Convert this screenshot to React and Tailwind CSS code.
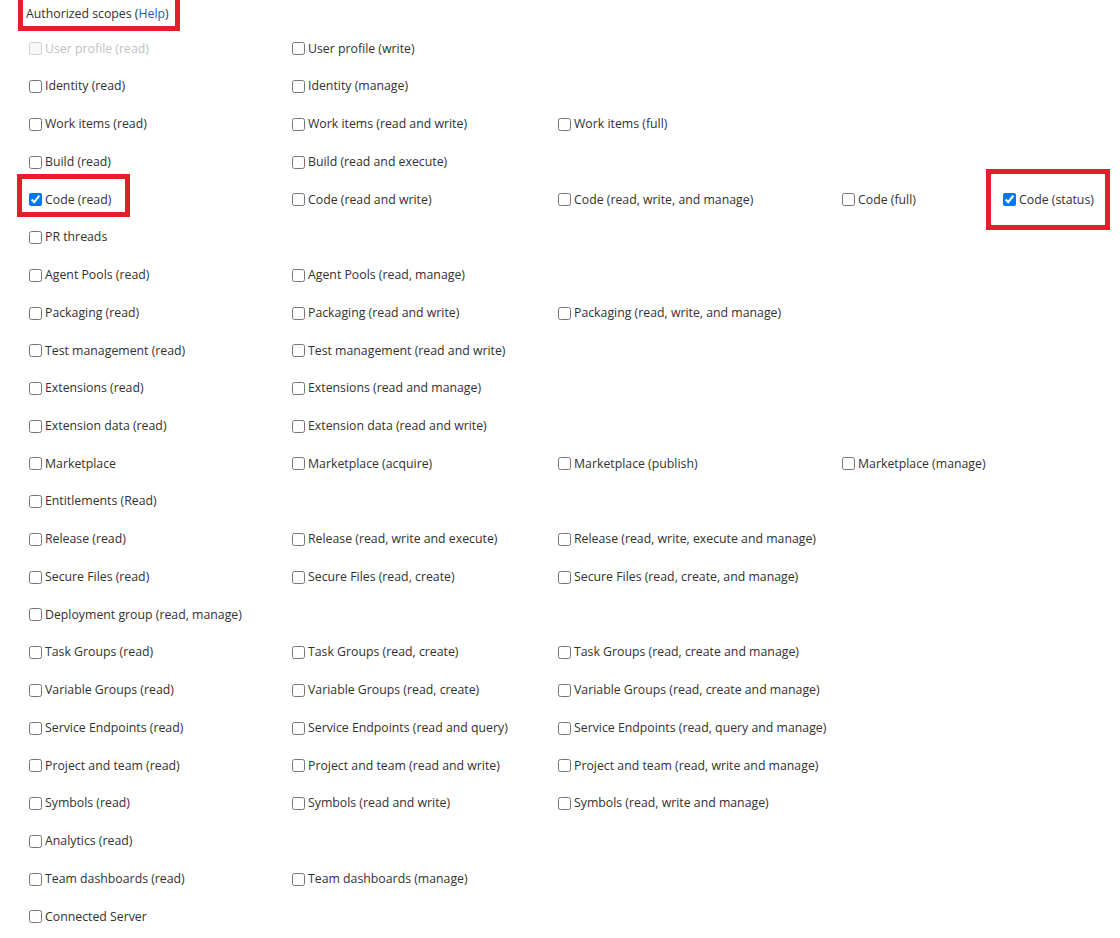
import React from "react";

// scope rows, one array per row, null = empty cell
const rows = [
    [["User profile (read)", "disabled"], ["User profile (write)"]],
    [["Identity (read)"], ["Identity (manage)"]],
    [["Work items (read)"], ["Work items (read and write)"], ["Work items (full)"]],
    [["Build (read)"], ["Build (read and execute)"]],
    [["Code (read)", "checked"], ["Code (read and write)"], ["Code (read, write, and manage)"], ["Code (full)"], ["Code (status)", "checked"]],
    [["PR threads"]],
    [["Agent Pools (read)"], ["Agent Pools (read, manage)"]],
    [["Packaging (read)"], ["Packaging (read and write)"], ["Packaging (read, write, and manage)"]],
    [["Test management (read)"], ["Test management (read and write)"]],
    [["Extensions (read)"], ["Extensions (read and manage)"]],
    [["Extension data (read)"], ["Extension data (read and write)"]],
    [["Marketplace"], ["Marketplace (acquire)"], ["Marketplace (publish)"], ["Marketplace (manage)"]],
    [["Entitlements (Read)"]],
    [["Release (read)"], ["Release (read, write and execute)"], ["Release (read, write, execute and manage)"]],
    [["Secure Files (read)"], ["Secure Files (read, create)"], ["Secure Files (read, create, and manage)"]],
    [["Deployment group (read, manage)"]],
    [["Task Groups (read)"], ["Task Groups (read, create)"], ["Task Groups (read, create and manage)"]],
    [["Variable Groups (read)"], ["Variable Groups (read, create)"], ["Variable Groups (read, create and manage)"]],
    [["Service Endpoints (read)"], ["Service Endpoints (read and query)"], ["Service Endpoints (read, query and manage)"]],
    [["Project and team (read)"], ["Project and team (read and write)"], ["Project and team (read, write and manage)"]],
    [["Symbols (read)"], ["Symbols (read and write)"], ["Symbols (read, write and manage)"]],
    [["Analytics (read)"]],
    [["Team dashboards (read)"], ["Team dashboards (manage)"]],
    [["Connected Server"]],
];

function Scope({ label, state }) {
    const disabled = state === "disabled";
    return (
        <label className={`flex items-center whitespace-nowrap ${disabled ? "text-[#c2c2c2]" : "text-[#323130]"}`}>
            <input
                type="checkbox"
                readOnly
                checked={state === "checked"}
                disabled={disabled}
                className="m-0 mr-[3px] w-[13px] h-[13px] accent-[#0075ff]"
            />
            {label}
        </label>
    );
}

export default function App() {
    return (
        <div className="relative w-[1120px] h-[938px] bg-white overflow-hidden text-[12.3px] font-['Open_Sans',sans-serif]">
            {/* Header */}
            <div className="h-[30px] pl-[26px] pb-[2px] flex items-center text-[#323130]">
                Authorized scopes (<a className="text-[#1f5bb8]">Help</a>)
            </div>

            {/* Scope grid */}
            <div className="pl-[29px] grid grid-cols-[263px_266px_284px_161px_auto] auto-rows-[37.74px] items-center">
                {rows.map((row, i) =>
                    [0, 1, 2, 3, 4].map((c) => (
                        <div key={`${i}-${c}`}>
                            {row[c] && <Scope label={row[c][0]} state={row[c][1]} />}
                        </div>
                    ))
                )}
            </div>

            {/* Red annotation boxes drawn over the form */}
            <div className="absolute left-[18px] top-[-5px] w-[162px] h-[36px] border-[5px] border-[#e3202a]" />
            <div className="absolute left-[17px] top-[174px] w-[113px] h-[43px] border-[5px] border-[#e3202a]" />
            <div className="absolute left-[986px] top-[169px] w-[124px] h-[61px] border-[5px] border-[#e3202a]" />
        </div>
    );
}
